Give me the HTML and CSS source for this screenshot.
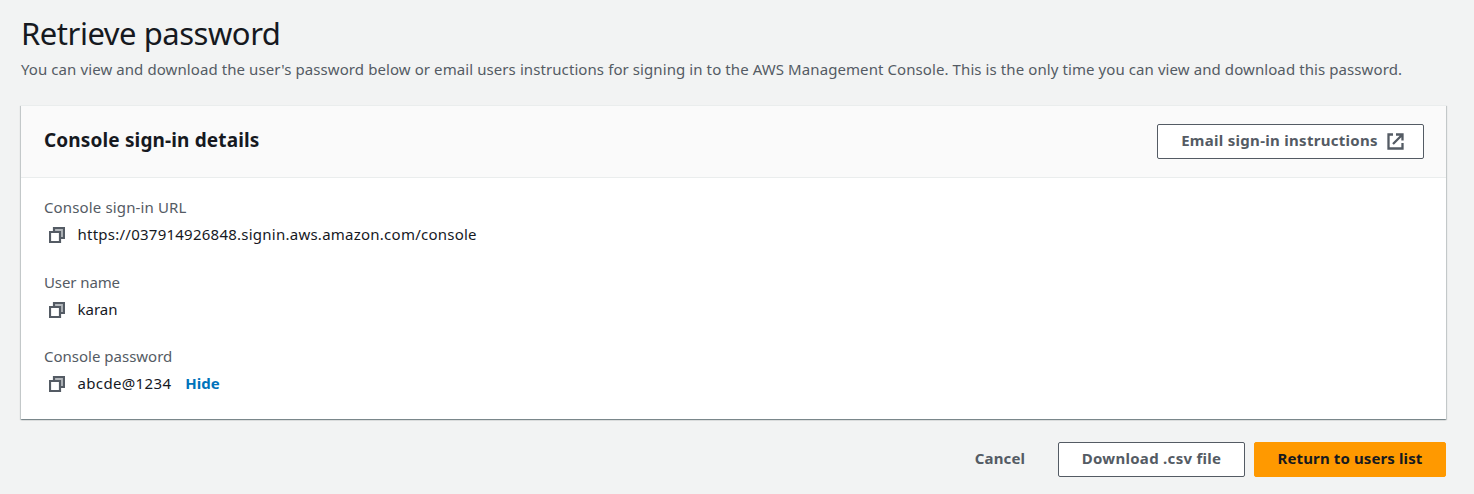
FILE: index.html
```
<!DOCTYPE html>
<html lang="en">
<head>
<meta charset="utf-8">
<title>Retrieve password</title>
<link rel="stylesheet" href="styles.css">
</head>
<body>
<svg class="sprite" aria-hidden="true">
  <symbol id="copy" viewBox="0 0 16 16">
    <path class="copy-fill" d="M6 2H14V10H11V5H6Z"/>
    <path class="copy-back" d="M5 5V1H15V11H11"/>
    <path class="copy-front" d="M1 5H11V15H1Z"/>
  </symbol>
</svg>
<main class="page">
  <header class="page-header">
    <h1 class="title">Retrieve password</h1>
    <p class="description">You can view and download the user's password below or email users instructions for signing in to the AWS Management Console. This is the only time you can view and download this password.</p>
  </header>
  <section class="card">
    <div class="card-header">
      <h2 class="card-title">Console sign-in details</h2>
      <button class="button button-email"><span>Email sign-in instructions</span>
        <svg class="external" viewBox="0 0 17 17"><path d="M6 1.5H1.5V15.5H15.5V10M9 1.5H15.5V7.5M15 2L6 11"/></svg>
      </button>
    </div>
    <dl class="details">
      <div class="field">
        <dt class="label label-url">Console sign-in URL</dt>
        <dd class="value"><svg class="copy"><use href="#copy"/></svg><span class="url">https://037914926848.signin.aws.amazon.com/console</span></dd>
      </div>
      <div class="field">
        <dt class="label label-user">User name</dt>
        <dd class="value"><svg class="copy"><use href="#copy"/></svg><span class="user">karan</span></dd>
      </div>
      <div class="field">
        <dt class="label label-password">Console password</dt>
        <dd class="value"><svg class="copy"><use href="#copy"/></svg><span class="password">abcde@1234</span><a class="hide">Hide</a></dd>
      </div>
    </dl>
  </section>
  <footer class="actions">
    <button class="button button-cancel">Cancel</button>
    <button class="button button-download">Download .csv file</button>
    <button class="button button-primary">Return to users list</button>
  </footer>
</main>
</body>
</html>
```
FILE: styles.css
```
* { box-sizing: border-box; }
body {
  margin: 0;
  background: #f2f3f3;
  color: #16191f;
  font: 15px/25px "Noto Sans", "Open Sans", sans-serif;
}
h1, h2, p, dl, dd { margin: 0; }
.sprite { display: none; }
.page { padding: 13px 28px 0 21px; }
.page-header { height: 92px; white-space: nowrap; }
.title { font-size: 31px; line-height: 41px; font-weight: 400; letter-spacing: -0.47px; }
.description { margin-top: 3px; color: #545b64; letter-spacing: 0.087px; }
.card {
  height: 314px;
  background: #fff;
  border-top: 1px solid #eaeded;
  box-shadow: 0 1px 1px rgba(0, 28, 36, 0.3), 1px 1px 1px rgba(0, 28, 36, 0.15), -1px 1px 1px rgba(0, 28, 36, 0.15);
}
.card-header {
  display: flex;
  justify-content: space-between;
  height: 72px;
  padding: 18px 22px 0 23px;
  background: #fafafa;
  border-bottom: 1px solid #eaeded;
}
.card-title { font-size: 19px; line-height: 32px; font-weight: 700; letter-spacing: 0.14px; }
.button {
  display: flex;
  align-items: center;
  justify-content: center;
  height: 35px;
  padding: 0 0 2px;
  border: 1px solid #545b64;
  border-radius: 2px;
  background: #fff;
  color: #545b64;
  font: 700 15px/25px "Noto Sans", "Open Sans", sans-serif;
  letter-spacing: 0.29px;
  white-space: nowrap;
}
.button-email { width: 267px; gap: 9px; padding-left: 4px; }
.external { width: 17px; height: 17px; margin-top: 2px; fill: none; stroke: #545b64; stroke-width: 2.3; }
.details { display: flex; flex-direction: column; gap: 22.5px; padding: 17px 23px; }
.field { height: 52px; }
.label { color: #545b64; }
.label-url { letter-spacing: 0.14px; }
.label-user { letter-spacing: -0.1px; }
.value { display: flex; align-items: center; height: 25px; margin-top: 2px; padding-left: 5px; }
.copy { width: 16px; height: 16px; margin: 1.8px 12.5px 0 0; }
.copy-back, .copy-front { fill: none; stroke: #545b64; stroke-width: 2.2; }
.copy-front { fill: #fff; }
.copy-fill { fill: #b5b9bd; }
.url { letter-spacing: 0.245px; }
.password { letter-spacing: 0.35px; }
.hide { margin-left: 14px; color: #0073bb; font-weight: 700; }
.actions { display: flex; justify-content: flex-end; gap: 9px; padding-top: 23px; }
.button-cancel { width: 98px; background: transparent; border-color: transparent; letter-spacing: 0.15px; }
.button-download { width: 187px; }
.button-primary { width: 192px; border-color: #f90; background: #f90; color: #16191f; letter-spacing: 0.12px; }
```
